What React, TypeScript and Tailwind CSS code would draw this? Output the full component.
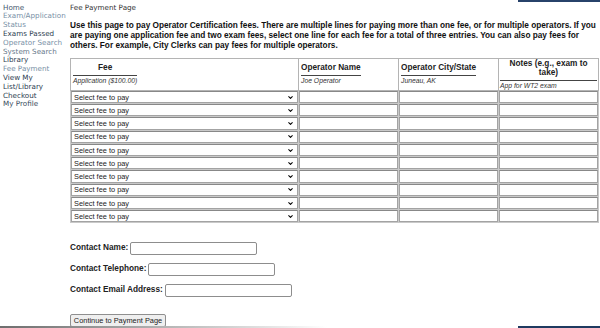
import { ChevronDown } from 'lucide-react'

const navLinks = [
  { label: ['Home'], color: 'text-[#44586e]' },
  { label: ['Exam/Application', 'Status'], color: 'text-[#7890a6]' },
  { label: ['Exams Passed'], color: 'text-[#2c3d50]' },
  { label: ['Operator Search'], color: 'text-[#7890a6]' },
  { label: ['System Search'], color: 'text-[#66788a]' },
  { label: ['Library'], color: 'text-[#2c3d50]' },
  { label: ['Fee Payment'], color: 'text-[#7890a6]' },
  { label: ['View My', 'List/Library'], color: 'text-[#2c3d50]' },
  { label: ['Checkout'], color: 'text-[#2c3d50]' },
  { label: ['My Profile'], color: 'text-[#3a4c60]' },
]

const columns = [
  { title: 'Fee', example: 'Application ($100.00)', width: 'w-[228px]' },
  { title: 'Operator Name', example: 'Joe Operator', width: 'w-[100px]' },
  { title: 'Operator City/State', example: 'Juneau, AK', width: 'w-[100px]' },
]

const rows = Array.from({ length: 10 }, (_, i) => i)

function HeaderCell({ title, example, wide }: { title: string; example: string; wide?: boolean }) {
  return (
    <table className={`border-collapse ${wide ? 'w-full' : ''}`}>
      <tbody>
        <tr>
          <th className="border-b border-[#444] pb-[3px] text-center text-[8.25px] leading-[9px] font-bold text-[#222]">
            {title}
          </th>
        </tr>
        <tr>
          <td className="pt-[1px] text-left text-[6.8px] leading-[8px] italic text-[#333]">{example}</td>
        </tr>
      </tbody>
    </table>
  )
}

function FeeSelect() {
  return (
    <div className="flex h-[12.25px] w-full items-center justify-between border border-[#a3a3a3] border-t-[#888] bg-white pr-[3px] pl-[2px] text-[7.4px] text-[#222]">
      <span>Select fee to pay</span>
      <ChevronDown className="h-[7px] w-[7px] text-black" strokeWidth={3.5} />
    </div>
  )
}

function TextBox() {
  return <div className="h-[12.25px] w-full border border-[#a3a3a3] border-t-[#888] bg-white" />
}

function ContactRow({ label }: { label: string }) {
  return (
    <div className="flex items-center gap-[2px]">
      <span className="text-[8.25px] font-bold text-[#222]">{label}</span>
      <div className="h-[13px] w-[127px] rounded-[2px] border border-[#8d8d8d] bg-white" />
    </div>
  )
}

export default function App() {
  return (
    <div className="flex h-[328px] w-[600px] flex-col overflow-hidden bg-white font-['Liberation_Sans',Arial,sans-serif]">
      <div className="flex h-[2px] justify-end">
        <div className="w-[82px] bg-[#27426a]" />
      </div>

      <div className="flex min-h-0 flex-1">
        <nav className="w-[70px] shrink-0 pt-[1.6px] pl-[3px] font-['DejaVu_Sans',Verdana,sans-serif] text-[7.2px] leading-[8.8px]">
          {navLinks.map((link) => (
            <a key={link.label.join(' ')} className={`block ${link.color}`}>
              {link.label.map((part, i) => (
                <span key={part}>
                  {i > 0 && <br />}
                  {part}
                </span>
              ))}
            </a>
          ))}
        </nav>

        <main className="flex-1 pt-[1.6px] pr-[1px]">
          <div className="font-['DejaVu_Sans',Verdana,sans-serif] text-[7.2px] leading-[8.8px] text-[#333]">
            Fee Payment Page
          </div>

          <p className="mt-[8.6px] pr-[2px] text-[8.25px] leading-[10px] font-bold text-[#111]">
            Use this page to pay Operator Certification fees. There are multiple lines for paying more than one
            fee, or for multiple operators. If you are paying one application fee and two exam fees, select one
            line for each fee for a total of three entries. You can also pay fees for others. For example, City
            Clerks can pay fees for multiple operators.
          </p>

          <table className="mt-[7px] w-[529px] table-fixed border-collapse border border-[#b4b4b4]">
            <thead>
              <tr className="h-[31px]">
                {columns.map((col) => (
                  <td key={col.title} className={`${col.width} border border-[#b4b4b4] px-[2px] align-middle`}>
                    <HeaderCell title={col.title} example={col.example} />
                  </td>
                ))}
                <td className="border border-[#b4b4b4] px-[1px] align-middle">
                  <HeaderCell title="Notes (e.g., exam to take)" example="App for WT2 exam" wide />
                </td>
              </tr>
            </thead>
            <tbody>
              {rows.map((r) => (
                <tr key={r}>
                  <td className="border border-[#c9c9c9] p-0">
                    <FeeSelect />
                  </td>
                  <td className="border border-[#c9c9c9] p-0">
                    <TextBox />
                  </td>
                  <td className="border border-[#c9c9c9] p-0">
                    <TextBox />
                  </td>
                  <td className="border border-[#c9c9c9] p-0">
                    <TextBox />
                  </td>
                </tr>
              ))}
            </tbody>
          </table>

          <div className="mt-[18.5px] flex flex-col gap-[8px]">
            <ContactRow label="Contact Name:" />
            <ContactRow label="Contact Telephone:" />
            <ContactRow label="Contact Email Address:" />
          </div>

          <button className="mt-[17.5px] flex h-[12.5px] w-[96px] items-center justify-center rounded-[2px] border border-[#8f8f8f] bg-[#efefef] text-[7.4px] text-[#222]">
            Continue to Payment Page
          </button>
        </main>
      </div>

      <div className="flex h-[2px] justify-between">
        <div className="w-[327px] bg-linear-to-r from-[#6e6e6e] to-white" />
        <div className="w-[82px] bg-[#1f3a60]" />
      </div>
    </div>
  )
}
